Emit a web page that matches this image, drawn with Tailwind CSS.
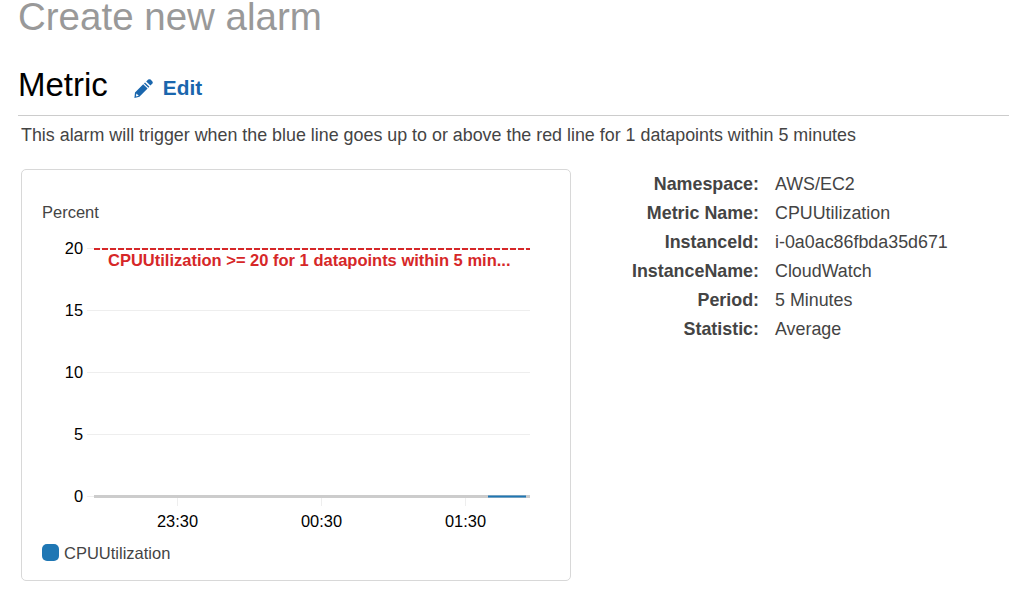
<!DOCTYPE html>
<html lang="en">
<head>
    <meta charset="UTF-8">
    <title>Create new alarm</title>
    <script src="https://cdn.jsdelivr.net/npm/@tailwindcss/browser@4"></script>
</head>
<body class="bg-white h-[593px] overflow-hidden font-['Liberation_Sans',Arial,sans-serif] text-[#444]">
    <main class="pl-[18px]">
        <h1 class="text-[38.5px] leading-[34px] text-[#999]">Create new alarm</h1>
        <div class="flex items-center h-[56px] mt-[26px] border-b border-[#ccc] pb-[6px]">
            <h2 class="text-[33px] leading-[40px] text-black">Metric</h2>
            <a class="flex items-center ml-[26px] mt-[7px] text-[20.8px] font-bold text-[#1a66ad]">
                <svg class="w-[19px] h-[19px] mr-[10px]" viewBox="0 0 19 19" fill="#1a66ad">
                    <path d="M14.2 .6 Q15.400 -.2 16.600 .6 L18.400 2.400 Q19.200 3.600 18.200 4.800 L16.400 6.600 12.200 2.400Z"/>
                    <path d="M11 3.400 15.400 7.800 14.400 8.800 10 4.400Z"/>
                    <path fill-rule="evenodd" d="M9.200 5.200 13.600 9.600 5.400 17.800 .4 18.900 1 13.400ZM2.400 14.400 1.900 17.400 4.800 16.800Z"/>
                </svg>
                Edit
            </a>
        </div>
        <p class="text-[17.88px] leading-[24px] ml-[3px] mt-[7px]">This alarm will trigger when the blue line goes up to or above the red line for 1 datapoints within 5 minutes</p>

        <div class="flex mt-[22px] ml-[3px]">
            <section class="w-[550px] h-[412px] border border-[#d8d8d8] rounded-[5px] shrink-0">
                <svg class="block" width="548" height="410" viewBox="22 170 548 410" font-family="'Liberation Sans', Arial, sans-serif" font-size="16.4">
                    <text x="42" y="218" fill="#444" font-size="16.500">Percent</text>

                    <g stroke="#eeeeee" stroke-width="1">
                        <path d="M87 248.500H530M87 310.500H530M87 372.500H530M87 434.500H530M87 496.500H94"/>
                        <path d="M177.500 498V506M321.500 498V506M465.500 498V506"/>
                    </g>

                    <g fill="#000" text-anchor="end">
                        <text x="83" y="254">20</text>
                        <text x="83" y="316">15</text>
                        <text x="83" y="378">10</text>
                        <text x="83" y="440">5</text>
                        <text x="83" y="502">0</text>
                    </g>

                    <path d="M94 249H530" stroke="#d62728" stroke-width="2" stroke-dasharray="6 2"/>
                    <text x="108" y="266" fill="#d62728" font-weight="700" font-size="16.500">CPUUtilization &gt;= 20 for 1 datapoints within 5 min...</text>

                    <path d="M94 496.500H530" stroke="#cccccc" stroke-width="3"/>
                    <path d="M488 496.500H526" stroke="#1f77b4" stroke-width="2"/>

                    <g fill="#000" text-anchor="middle">
                        <text x="177.500" y="527">23:30</text>
                        <text x="321.500" y="527">00:30</text>
                        <text x="465.500" y="527">01:30</text>
                    </g>

                    <rect x="42" y="544" width="17" height="17" rx="5" fill="#1f77b4"/>
                    <text x="64" y="559" fill="#444" font-size="16.500">CPUUtilization</text>
                </svg>
            </section>

            <dl class="grid grid-cols-[188px_auto] gap-x-[16px] text-[17.88px] leading-[29px] mt-[1px] content-start">
                <dt class="font-bold text-right">Namespace:</dt><dd>AWS/EC2</dd>
                <dt class="font-bold text-right">Metric Name:</dt><dd>CPUUtilization</dd>
                <dt class="font-bold text-right">InstanceId:</dt><dd>i-0a0ac86fbda35d671</dd>
                <dt class="font-bold text-right">InstanceName:</dt><dd>CloudWatch</dd>
                <dt class="font-bold text-right">Period:</dt><dd>5 Minutes</dd>
                <dt class="font-bold text-right">Statistic:</dt><dd>Average</dd>
            </dl>
        </div>
    </main>
</body>
</html>
